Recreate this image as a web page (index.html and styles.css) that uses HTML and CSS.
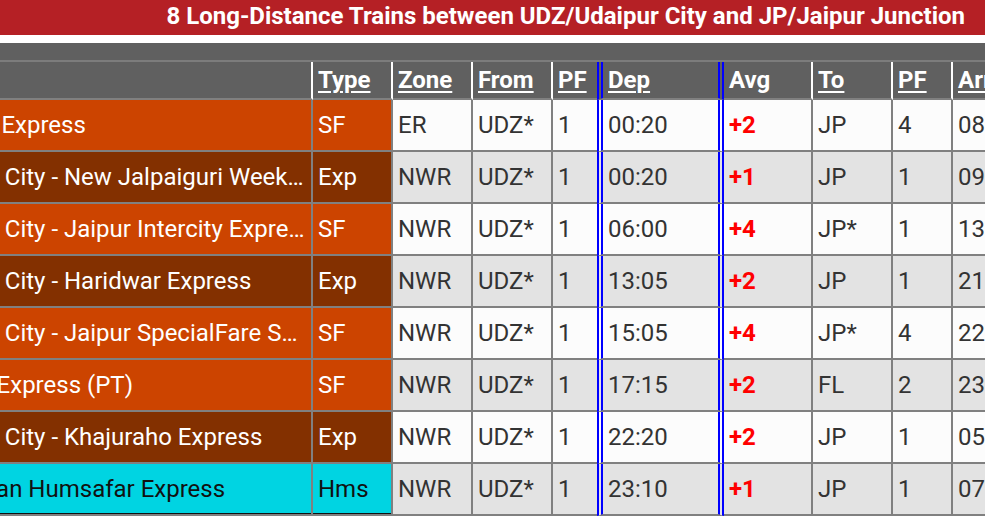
FILE: index.html
```html
<!DOCTYPE html>
<html lang="en">
<head>
<meta charset="utf-8">
<title>Trains between UDZ and JP</title>
<link rel="stylesheet" href="styles.css">
</head>
<body>
<h1 class="title">8 Long-Distance Trains between UDZ/Udaipur City and JP/Jaipur Junction</h1>
<div class="scroller">
<table class="trains">
<colgroup>
<col class="w-name">
<col class="w-type">
<col class="w-std">
<col class="w-std">
<col class="w-pf1">
<col class="w-dep">
<col class="w-avg">
<col class="w-std">
<col class="w-pf2">
<col class="w-arr">
<col class="w-extra">
</colgroup>
<thead>
<tr class="band"><th colspan="11"></th></tr>
<tr class="heads">
<th></th>
<th><a href="#">Type</a></th>
<th><a href="#">Zone</a></th>
<th><a href="#">From</a></th>
<th class="c-pf1"><a href="#">PF</a></th>
<th class="c-dep"><a href="#">Dep</a></th>
<th>Avg</th>
<th><a href="#">To</a></th>
<th><a href="#">PF</a></th>
<th><a href="#">Arr</a></th>
<th></th>
</tr>
</thead>
<tbody>
<tr class="odd">
<td class="sf"><div class="nm">Ananya Express</div></td>
<td class="sf">SF</td><td>ER</td><td>UDZ*</td><td class="c-pf1">1</td><td class="c-dep">00:20</td><td class="c-avg">+2</td><td>JP</td><td>4</td><td>08:25</td><td></td>
</tr>
<tr class="even">
<td class="exp"><div class="nm">Udaipur City - New Jalpaiguri Weekly Express</div></td>
<td class="exp">Exp</td><td>NWR</td><td>UDZ*</td><td class="c-pf1">1</td><td class="c-dep">00:20</td><td class="c-avg">+1</td><td>JP</td><td>1</td><td>09:00</td><td></td>
</tr>
<tr class="odd">
<td class="sf"><div class="nm">Udaipur City - Jaipur Intercity Express</div></td>
<td class="sf">SF</td><td>NWR</td><td>UDZ*</td><td class="c-pf1">1</td><td class="c-dep">06:00</td><td class="c-avg">+4</td><td>JP*</td><td>1</td><td>13:10</td><td></td>
</tr>
<tr class="even">
<td class="exp"><div class="nm">Udaipur City - Haridwar Express</div></td>
<td class="exp">Exp</td><td>NWR</td><td>UDZ*</td><td class="c-pf1">1</td><td class="c-dep">13:05</td><td class="c-avg">+2</td><td>JP</td><td>1</td><td>21:05</td><td></td>
</tr>
<tr class="odd">
<td class="sf"><div class="nm">Udaipur City - Jaipur SpecialFare Special</div></td>
<td class="sf">SF</td><td>NWR</td><td>UDZ*</td><td class="c-pf1">1</td><td class="c-dep">15:05</td><td class="c-avg">+4</td><td>JP*</td><td>4</td><td>22:15</td><td></td>
</tr>
<tr class="even">
<td class="sf"><div class="nm">Chetak Express (PT)</div></td>
<td class="sf">SF</td><td>NWR</td><td>UDZ*</td><td class="c-pf1">1</td><td class="c-dep">17:15</td><td class="c-avg">+2</td><td>FL</td><td>2</td><td>23:40</td><td></td>
</tr>
<tr class="odd">
<td class="exp"><div class="nm">Udaipur City - Khajuraho Express</div></td>
<td class="exp">Exp</td><td>NWR</td><td>UDZ*</td><td class="c-pf1">1</td><td class="c-dep">22:20</td><td class="c-avg">+2</td><td>JP</td><td>1</td><td>05:35</td><td></td>
</tr>
<tr class="even">
<td class="hms"><div class="nm">Rajasthan Humsafar Express</div></td>
<td class="hms">Hms</td><td>NWR</td><td>UDZ*</td><td class="c-pf1">1</td><td class="c-dep">23:10</td><td class="c-avg">+1</td><td>JP</td><td>1</td><td>07:10</td><td></td>
</tr>
</tbody>
</table>
</div>
</body>
</html>
```

FILE: styles.css
```css
html, body {
  margin: 0;
  padding: 0;
  background: #ffffff;
  font-family: Roboto, "Liberation Sans", Arial, sans-serif;
}

.title {
  margin: 0;
  height: 35px;
  line-height: 33px;
  background: #b52025;
  color: #ffffff;
  font-size: 24px;
  font-weight: bold;
  text-align: right;
  padding-right: 20px;
  white-space: nowrap;
  overflow: hidden;
}

.scroller {
  margin-top: 8px;
  width: 985px;
  overflow: hidden;
}

.trains {
  margin-left: -89px;
  border-collapse: separate;
  border-spacing: 0;
  table-layout: fixed;
  font-size: 24px;
  color: #333333;
  width: 1192px;
}

.w-name { width: 402px; }
.w-type { width: 80px; }
.w-std { width: 80px; }
.w-pf1 { width: 44px; }
.w-dep { width: 127px; }
.w-avg { width: 89px; }
.w-pf2 { width: 60px; }
.w-arr { width: 70px; }
.w-extra { width: 80px; }

.trains th,
.trains td {
  padding: 0 5px;
  text-align: left;
  white-space: nowrap;
  overflow: hidden;
  border-right: 2px solid #808080;
  border-bottom: 2px solid #808080;
}

.band th {
  height: 17px;
  padding: 0;
  background: #606060;
  border-right: none;
  border-bottom: 2px solid #7c7c7c;
}

.heads th {
  height: 36px;
  line-height: 28px;
  background: #606060;
  color: #ffffff;
  font-weight: bold;
  border-right: 2px solid #ffffff;
  border-bottom: 2px solid #808080;
}

.heads th a {
  color: #ffffff;
  text-decoration: underline;
  text-underline-offset: 3px;
  text-decoration-thickness: 2px;
}

.trains td {
  height: 50px;
  line-height: 28px;
}

.trains tbody tr.odd td { background: #fcfcfc; }
.trains tbody tr.even td { background: #e3e3e3; }

.trains .c-pf1 { border-right: none; }
.trains .c-dep {
  border-left: 6px double #0000ff;
  border-right: 6px double #0000ff;
}

.trains td.c-avg {
  color: #ff0000;
  font-weight: bold;
}

.nm {
  overflow: hidden;
  text-overflow: ellipsis;
  white-space: nowrap;
}

.trains tbody tr td.sf { background: #cc4400; color: #ffffff; }
.trains tbody tr td.exp { background: #833000; color: #ffffff; }
.trains tbody tr td.hms {
  background: #00d4e2;
  color: #111111;
  box-shadow: inset 0 -1px 0 #111111;
}
```
